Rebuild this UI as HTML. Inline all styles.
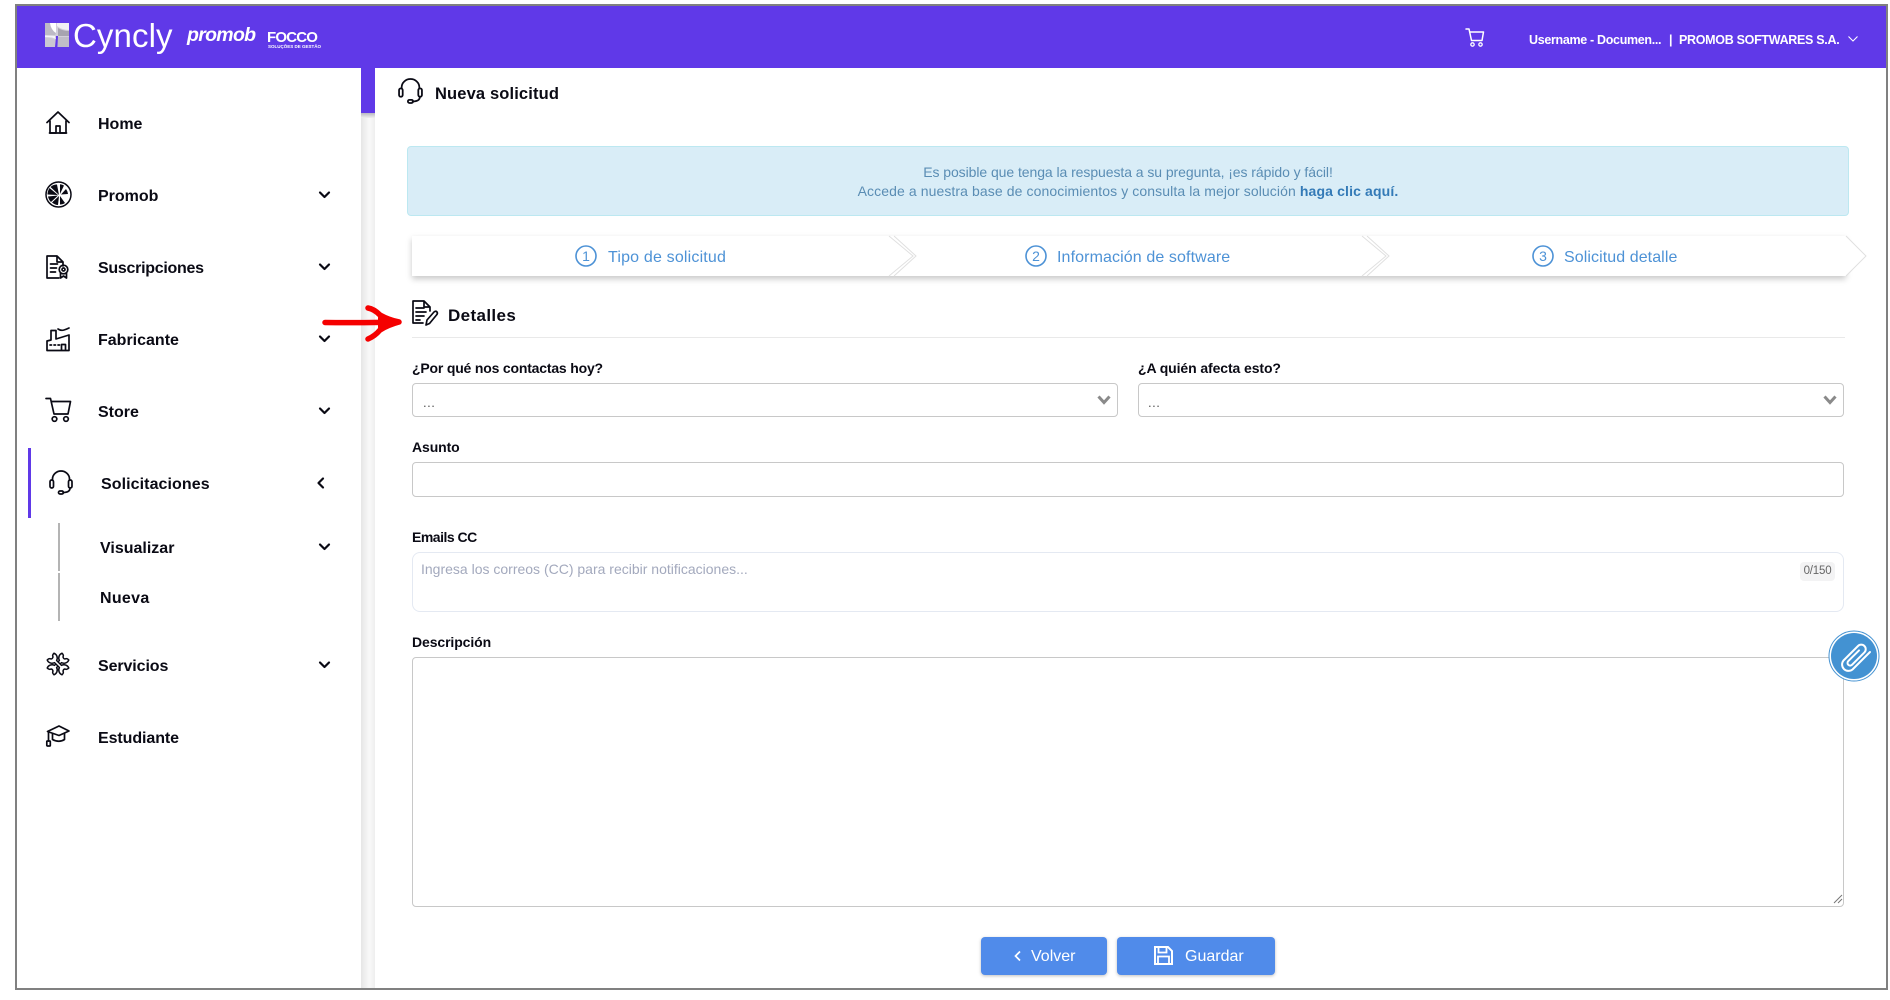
<!DOCTYPE html>
<html lang="es"><head><meta charset="utf-8"><title>Nueva solicitud</title>
<style>
*{box-sizing:border-box}
html,body{margin:0;padding:0;width:1890px;height:1000px;overflow:hidden;background:#fff;font-family:"Liberation Sans",sans-serif}
.a{position:absolute}
.t{position:absolute;white-space:nowrap;line-height:20px;height:20px}
.m{font-weight:700;font-size:16px;color:#0a0a14;left:98px}
.l{font-weight:700;font-size:14px;color:#0a0a14;letter-spacing:-.1px}
.f{position:absolute;background:#fff;border:1.5px solid #c8c8c8;border-radius:4px}
.s{font-size:16px;color:#4d92d6}
svg{position:absolute;overflow:visible}
.k{fill:none;stroke:#0a0a14;stroke-width:1.7;stroke-linecap:round;stroke-linejoin:round}
.c{fill:none;stroke:#0a0a14;stroke-width:2.2;stroke-linecap:round;stroke-linejoin:round}
</style></head><body>
<div class="a" style="left:15px;top:4px;width:1873px;height:986px;border:2px solid #808080;background:#fff"></div>
<div class="a" style="left:17px;top:6px;width:1869px;height:62px;background:#6039e8"></div>
<div class="a" style="left:361px;top:68px;width:14px;height:45px;background:#6039e8"></div>
<div class="a" style="left:361px;top:113px;width:14px;height:875px;background:linear-gradient(90deg,#e6e6e6,#f9f9f9 60%,#eee)"></div>
<div class="a" style="left:361px;top:113px;width:14px;height:5px;background:linear-gradient(#b9b9c0,#efefef)"></div>
<div class="a" style="left:17px;top:68px;width:344px;height:920px;background:#fff;border-top-right-radius:4px"></div>
<div class="a" style="left:375px;top:68px;width:1511px;height:920px;background:#fff;border-top-left-radius:4px"></div>

<!-- logo -->
<svg style="left:45px;top:23px" width="24" height="24" viewBox="0 0 24 24"><rect width="24" height="24" rx="1" fill="#d2cfda"/><path d="M0 0h5q1 7 6 10l-1 2H0z" fill="#bdbac6"/><path d="M5 0h6v10Q6 7 5 0z" fill="#fff"/><path d="M12 0h12v7q-7 0-12-4z" fill="#f1f0f4"/><path d="M13 5q5 3 11 3v5H13z" fill="#a7a4b0"/><path d="M0 15q6-1 10 2v7H0z" fill="#cbc8d2"/><path d="M11 13l-1 11h2.500l.5-11z" fill="#6039e8"/><path d="M13 14h11v10H13z" fill="#c0bdc8"/><path d="M0 12.500l10 .5 1 3-4-1.500-7-.5z" fill="#f5f4f8"/></svg>
<div class="t" style="left:73px;top:14px;height:44px;line-height:44px;font-size:33px;color:#fff;letter-spacing:.1px">Cyncly</div>
<div class="t" style="left:187px;top:24px;font-size:19.500px;line-height:22px;height:22px;color:#fff;font-weight:700;font-style:italic;letter-spacing:-.7px">promob</div>
<div class="t" style="left:267px;top:28px;font-size:15px;line-height:20px;color:#fff;font-weight:700;letter-spacing:-.8px">FOCCO</div>
<div class="t" style="left:268px;top:42.500px;height:8px;font-size:4.500px;line-height:8px;color:#fff;font-weight:700">SOLUÇÕES DE GESTÃO</div>

<!-- header right -->
<svg style="left:1465px;top:28px" width="20" height="20" viewBox="0 0 20 20"><path d="M1 1h3l2.500 11.500h10.500l1.500-8.500H5" fill="none" stroke="#fff" stroke-width="1.500" stroke-linejoin="round" stroke-linecap="round"/><circle cx="7.500" cy="16.500" r="1.700" fill="none" stroke="#fff" stroke-width="1.300"/><circle cx="15.500" cy="16.500" r="1.700" fill="none" stroke="#fff" stroke-width="1.300"/></svg>
<div class="t" style="left:1529px;top:30px;font-size:12.500px;font-weight:700;color:#fff;letter-spacing:-.32px">Username - Documen...</div>
<div class="t" style="left:1669px;top:30px;font-size:12.500px;font-weight:700;color:#fff">|</div>
<div class="t" style="left:1679px;top:30px;font-size:12.500px;font-weight:700;color:#fff;letter-spacing:-.3px">PROMOB SOFTWARES S.A.</div>
<svg style="left:1848px;top:36px" width="10" height="6" viewBox="0 0 10 6"><path d="M.5.500L5 5 9.500.5" fill="none" stroke="#fff" stroke-width="1.100"/></svg>

<!-- sidebar -->
<svg class="k" style="left:46px;top:111px" width="24" height="23" viewBox="0 0 24 23"><path d="M1 11.500L12 1l11 10.500M4 10v12h6V15h4v7h6V10"/><path d="M3.500 22h17"/></svg>
<div class="t m" style="top:115px">Home</div>
<svg style="left:45px;top:181px" width="27" height="27" viewBox="0 0 27 27"><circle cx="13.500" cy="13.500" r="12.500" fill="#fff" stroke="#0a0a14" stroke-width="1.500"/><path d="M14 14L12 3.500q-4 0-6.500 2.500zM13 14L4.500 7q-2 3-2 6.500zM13 14.500l-10 1q.7 3.500 3 5.500zM14 15l-7 6.500q3 2.500 6 2.500zM15 15v8.500q3 0 5-1.500zM15 13l4-8.500q-2-1-4-1.200zM16 13.500l7-.5q-.5-3-2-5z" fill="#0a0a14"/></svg>
<div class="t m" style="top:187px">Promob</div>
<svg class="c" style="left:319px;top:191px" width="11" height="8" viewBox="0 0 11 8"><path d="M1 1.500l4.500 4.500L10 1.500"/></svg>
<svg class="k" style="left:46px;top:255px" width="24" height="24" viewBox="0 0 24 24"><path d="M13 23H1V1h10l6 6v4M11 1v6h6"/><path d="M4.500 9h7M4.500 13h6M4.500 17h5"/><circle cx="17.500" cy="14.500" r="4.300"/><circle cx="17.500" cy="14.500" r="1.500"/><path d="M14.500 18v5l3-2 3 2v-5"/></svg>
<div class="t m" style="top:259px;letter-spacing:-.28px">Suscripciones</div>
<svg class="c" style="left:319px;top:263px" width="11" height="8" viewBox="0 0 11 8"><path d="M1 1.500l4.500 4.500L10 1.500"/></svg>
<svg class="k" style="left:46px;top:326px" width="26" height="26" viewBox="0 0 26 26"><path d="M1 24.500V15l4-1V4.500h5V13l13-4v15.500z"/><path d="M4 19h1.500M8 19h1.500M12 19h1.500"/><path d="M15.500 24v-5.500h4V24"/><path d="M12 3q3 2 6 1t5-2"/></svg>
<div class="t m" style="top:331px">Fabricante</div>
<svg class="c" style="left:319px;top:335px" width="11" height="8" viewBox="0 0 11 8"><path d="M1 1.500l4.500 4.500L10 1.500"/></svg>
<svg class="k" style="left:45px;top:397px" width="27" height="27" viewBox="0 0 27 27"><path d="M1 1.500h4.500L9 17h14l2.500-12.500H6.200"/><circle cx="9.500" cy="22" r="2.300"/><circle cx="21" cy="22" r="2.300"/></svg>
<div class="t m" style="top:403px">Store</div>
<svg class="c" style="left:319px;top:407px" width="11" height="8" viewBox="0 0 11 8"><path d="M1 1.500l4.500 4.500L10 1.500"/></svg>
<div class="a" style="left:28px;top:448px;width:3px;height:70px;background:#6039e8"></div>
<svg class="k" style="left:49px;top:470px" width="24" height="25" viewBox="0 0 24 25"><path d="M3.500 10V9a8.500 8 0 0 1 17 0v1"/><rect x="1" y="10" width="3.500" height="8" rx="1.700"/><rect x="19.500" y="10" width="3.500" height="8" rx="1.700"/><path d="M21 18q0 4.500-7 4.500"/><rect x="9.500" y="21" width="5" height="3" rx="1.500"/></svg>
<div class="t m" style="left:101px;top:475px;letter-spacing:.08px">Solicitaciones</div>
<svg class="c" style="left:317px;top:477px" width="8" height="12" viewBox="0 0 8 12"><path d="M6 1.500L1.500 6 6 10.500"/></svg>
<div class="a" style="left:58px;top:523px;width:2px;height:48px;background:#b4b4b4"></div>
<div class="a" style="left:58px;top:573px;width:2px;height:48px;background:#b4b4b4"></div>
<div class="t m" style="left:100px;top:539px">Visualizar</div>
<svg class="c" style="left:319px;top:543px" width="11" height="8" viewBox="0 0 11 8"><path d="M1 1.500l4.500 4.500L10 1.500"/></svg>
<div class="t m" style="left:100px;top:589px;letter-spacing:.3px">Nueva</div>
<svg style="left:46px;top:652px" width="24" height="24" viewBox="0 0 24 24"><g fill="#fff" stroke="#0a0a14" stroke-width="1.500" stroke-linejoin="round"><path transform="translate(24 0) scale(-1 1)" d="M8 1.200Q6 3 7 5 6.500 7 5 7 3 6 1.200 8A5.200 5.200 0 0 0 8.500 10.600L13.400 15.500A5.200 5.200 0 0 0 16 22.800Q18 21 17 19 17.500 17 19 17 21 18 22.800 16A5.200 5.200 0 0 0 15.500 13.400L10.600 8.500A5.200 5.200 0 0 0 8 1.200z"/><path d="M8 1.200Q6 3 7 5 6.500 7 5 7 3 6 1.200 8A5.200 5.200 0 0 0 8.500 10.600L13.400 15.500A5.200 5.200 0 0 0 16 22.800Q18 21 17 19 17.500 17 19 17 21 18 22.800 16A5.200 5.200 0 0 0 15.500 13.400L10.600 8.500A5.200 5.200 0 0 0 8 1.200z"/></g></svg>
<div class="t m" style="top:657px;letter-spacing:-.1px">Servicios</div>
<svg class="c" style="left:319px;top:661px" width="11" height="8" viewBox="0 0 11 8"><path d="M1 1.500l4.500 4.500L10 1.500"/></svg>
<svg class="k" style="left:46px;top:725px" width="24" height="22" viewBox="0 0 24 22"><path d="M1.500 6.500L13 1l10 5-10 4.500z"/><path d="M6.500 9v5.500q6.500 3.500 12 0V8.500"/><path d="M2.500 7V16"/><rect x=".8" y="16" width="3.500" height="5" rx=".8"/></svg>
<div class="t m" style="top:729px;letter-spacing:-.08px">Estudiante</div>

<!-- arrow -->
<svg style="left:320px;top:303px" width="84" height="40" viewBox="0 0 84 40"><path d="M5 19.500q32 .5 72-.5" stroke="#f50000" stroke-width="5.500" stroke-linecap="round" fill="none"/><path d="M48 5q6 1 12 7 9 5 19 7-11 3-19 8-5 6-12 9" fill="none" stroke="#f50000" stroke-width="5.500" stroke-linecap="round" stroke-linejoin="round"/><path d="M58 14l20 5-20 6z" fill="#f50000"/></svg>

<!-- title -->
<svg class="k" style="left:398px;top:78px" width="25" height="26" viewBox="0 0 24 25"><path d="M3.500 10V9a8.500 8 0 0 1 17 0v1"/><rect x="1" y="10" width="3.500" height="8" rx="1.700"/><rect x="19.500" y="10" width="3.500" height="8" rx="1.700"/><path d="M21 18q0 4.500-7 4.500"/><rect x="9.500" y="21" width="5" height="3" rx="1.500"/></svg>
<div class="t" style="left:435px;top:84px;font-size:16.500px;font-weight:700;color:#0a0a14;letter-spacing:.14px">Nueva solicitud</div>

<!-- alert -->
<div class="a" style="left:407px;top:146px;width:1442px;height:70px;background:#d9edf7;border:1px solid #bce8f1;border-radius:4px"></div>
<div class="t" style="left:407px;width:1442px;top:162px;text-align:center;font-size:14px;color:#5a8db4;letter-spacing:-.065px">Es posible que tenga la respuesta a su pregunta, ¡es rápido y fácil!</div>
<div class="t" style="left:407px;width:1442px;top:181px;text-align:center;font-size:14px;color:#5a8db4;letter-spacing:.095px">Accede a nuestra base de conocimientos y consulta la mejor solución <b style="color:#337ab7;letter-spacing:.14px">haga clic aquí.</b></div>

<!-- steps -->
<div class="a" style="left:412px;top:236px;width:1434px;height:40px;box-shadow:0 3px 6px rgba(0,0,0,.22)"></div>
<svg style="left:412px;top:236px" width="1460" height="42" viewBox="0 0 1460 42"><path d="M0 0H477L504 20 477 40H0z" fill="#fff"/><path d="M477 0H950L977 20 950 40H477z" fill="#fff"/><path d="M950 0H1434L1454 20 1434 40H950z" fill="#fff"/><path d="M477 0L501 20 477 40M482 0L504 20 482 40M950 0L974 20 950 40M955 0L977 20 955 40M1434 0L1454 20 1434 40" fill="none" stroke="#e0e0e0" stroke-width="1"/></svg>
<svg style="left:575px;top:245px" width="22" height="22" viewBox="0 0 22 22"><circle cx="11" cy="11" r="10" fill="none" stroke="#4d92d6" stroke-width="1.600"/></svg>
<div class="t" style="left:575px;width:22px;text-align:center;top:246px;font-size:14px;color:#4d92d6">1</div>
<div class="t s" style="left:608px;top:248px;letter-spacing:.18px">Tipo de solicitud</div>
<svg style="left:1025px;top:245px" width="22" height="22" viewBox="0 0 22 22"><circle cx="11" cy="11" r="10" fill="none" stroke="#4d92d6" stroke-width="1.600"/></svg>
<div class="t" style="left:1025px;width:22px;text-align:center;top:246px;font-size:14px;color:#4d92d6">2</div>
<div class="t s" style="left:1057px;top:248px;letter-spacing:.11px">Información de software</div>
<svg style="left:1532px;top:245px" width="22" height="22" viewBox="0 0 22 22"><circle cx="11" cy="11" r="10" fill="none" stroke="#4d92d6" stroke-width="1.600"/></svg>
<div class="t" style="left:1532px;width:22px;text-align:center;top:246px;font-size:14px;color:#4d92d6">3</div>
<div class="t s" style="left:1564px;top:248px;letter-spacing:.08px">Solicitud detalle</div>

<!-- detalles -->
<svg class="k" style="left:412px;top:300px" width="26" height="26" viewBox="0 0 26 26" stroke-width="1.500"><path d="M11 23H1V1h11l6 6v4M12 1v6h6"/><path d="M4 8h8M4 12h10M4 16h8M4 20h4"/><path d="M14 25l1-5 7-8q2-1.500 3 0t-.5 3l-7 8.500z"/></svg>
<div class="t" style="left:448px;top:306px;font-size:17px;font-weight:700;color:#0a0a14;letter-spacing:.37px">Detalles</div>
<div class="a" style="left:412px;top:337px;width:1433px;height:1px;background:#e9e9e9"></div>

<div class="t l" style="left:412px;top:358px;letter-spacing:-.19px">¿Por qué nos contactas hoy?</div>
<div class="f" style="left:412px;top:383px;width:706px;height:34px"></div>
<div class="t" style="left:423px;top:393px;font-size:13px;color:#555;letter-spacing:.5px">...</div>
<svg style="left:1097px;top:395px" width="14" height="10" viewBox="0 0 14 10"><path d="M1.500 1.500L7 7.500l5.500-6" fill="none" stroke="#8a8a8a" stroke-width="3"/></svg>

<div class="t l" style="left:1138px;top:358px">¿A quién afecta esto?</div>
<div class="f" style="left:1138px;top:383px;width:706px;height:34px"></div>
<div class="t" style="left:1148px;top:393px;font-size:13px;color:#555;letter-spacing:.5px">...</div>
<svg style="left:1823px;top:395px" width="14" height="10" viewBox="0 0 14 10"><path d="M1.500 1.500L7 7.500l5.500-6" fill="none" stroke="#8a8a8a" stroke-width="3"/></svg>

<div class="t l" style="left:412px;top:437px">Asunto</div>
<div class="f" style="left:412px;top:462px;width:1432px;height:35px"></div>

<div class="t l" style="left:412px;top:527px;letter-spacing:-.5px">Emails CC</div>
<div class="a" style="left:412px;top:552px;width:1432px;height:60px;border:1.500px solid #e4e9f2;border-radius:8px;background:#fff"></div>
<div class="t" style="left:421px;top:559px;font-size:14px;color:#a3a9bd">Ingresa los correos (CC) para recibir notificaciones...</div>
<div class="a" style="left:1800px;top:562px;width:35px;height:19px;background:#f3f3f4;border-radius:4px;text-align:center;line-height:19px;font-size:11.500px;color:#666;letter-spacing:-.2px">0/150</div>

<div class="t l" style="left:412px;top:632px">Descripción</div>
<div class="f" style="left:412px;top:657px;width:1432px;height:250px"></div>
<svg style="left:1833px;top:894px" width="10" height="10" viewBox="0 0 10 10"><path d="M1 9L9 1M5 9L9 5" stroke="#777" stroke-width="1"/></svg>

<svg style="left:1825px;top:625px" width="60" height="60" viewBox="0 0 60 60"><circle cx="29" cy="31" r="25" fill="#fff" stroke="#4392d2" stroke-width="1"/><circle cx="29" cy="31" r="23" fill="#4392d2"/><path d="M45 27L27.500 44.500A6.400 6.400 0 0 1 18.500 35.500L33 21A4.500 4.500 0 0 1 39.400 27.400L27 39.800A2.600 2.600 0 0 1 23.300 36.100L34 25.400" fill="none" stroke="#fff" stroke-width="2" stroke-linecap="round" stroke-linejoin="round"/></svg>

<!-- buttons -->
<div class="a" style="left:981px;top:937px;width:126px;height:38px;background:#508bea;border-radius:4px;box-shadow:0 1px 3px rgba(0,0,0,.25)"></div>
<svg style="left:1014px;top:950px" width="8" height="12" viewBox="0 0 8 12"><path d="M6 1.500L1.500 6 6 10.500" fill="none" stroke="#fff" stroke-width="1.700"/></svg>
<div class="t" style="left:1031px;top:947px;font-size:16px;color:#fff">Volver</div>
<div class="a" style="left:1117px;top:937px;width:158px;height:38px;background:#508bea;border-radius:4px;box-shadow:0 1px 3px rgba(0,0,0,.25)"></div>
<svg style="left:1154px;top:946px" width="19" height="19" viewBox="0 0 19 19"><path d="M1 1h13l4 4v13H1z" fill="none" stroke="#fff" stroke-width="2"/><path d="M4.500 1v5.500h8V1" fill="none" stroke="#fff" stroke-width="1.800"/><path d="M4 18v-7.500h11V18" fill="none" stroke="#fff" stroke-width="1.800"/></svg>
<div class="t" style="left:1185px;top:947px;font-size:16px;color:#fff">Guardar</div>
</body></html>
